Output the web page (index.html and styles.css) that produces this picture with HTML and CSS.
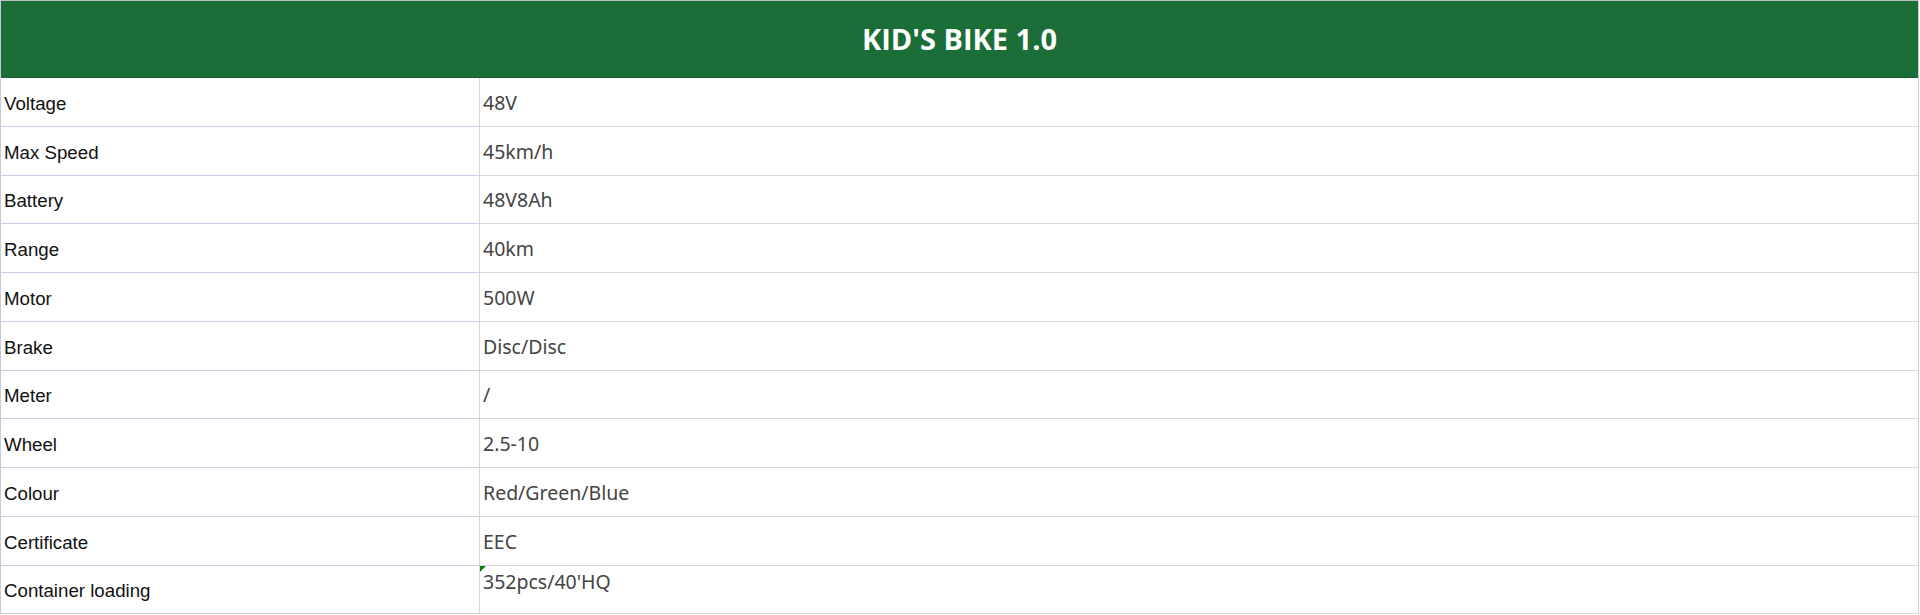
FILE: index.html
```html
<!DOCTYPE html>
<html lang="en">
<head>
<meta charset="utf-8">
<title>KID'S BIKE 1.0</title>
<link rel="stylesheet" href="styles.css">
</head>
<body>
<div class="sheet">
  <div class="title">KID'S BIKE 1.0</div>
  <div class="row"><div class="label">Voltage</div><div class="value">48V</div></div>
  <div class="row"><div class="label">Max Speed</div><div class="value">45km/h</div></div>
  <div class="row"><div class="label">Battery</div><div class="value">48V8Ah</div></div>
  <div class="row"><div class="label">Range</div><div class="value">40km</div></div>
  <div class="row"><div class="label">Motor</div><div class="value">500W</div></div>
  <div class="row"><div class="label">Brake</div><div class="value">Disc/Disc</div></div>
  <div class="row"><div class="label">Meter</div><div class="value">/</div></div>
  <div class="row"><div class="label">Wheel</div><div class="value">2.5-10</div></div>
  <div class="row"><div class="label">Colour</div><div class="value">Red/Green/Blue</div></div>
  <div class="row"><div class="label">Certificate</div><div class="value">EEC</div></div>
  <div class="row"><div class="label">Container loading</div><div class="value value-top flagged">352pcs/40'HQ</div></div>
</div>
</body>
</html>
```

FILE: styles.css
```css
html, body {
  margin: 0;
  padding: 0;
  background: #ffffff;
}

.sheet {
  width: 1919px;
  box-sizing: border-box;
  border-left: 1px solid #c3cbe0;
  border-right: 1px solid #cfcfcf;
  display: flex;
  flex-direction: column;
}

.title {
  height: 78px;
  box-sizing: border-box;
  border-top: 1px solid #bdbdbd;
  border-bottom: 1px solid #16602f;
  background: #1b6e38;
  color: #ffffff;
  font-family: "Open Sans", "Noto Sans", sans-serif;
  font-weight: 700;
  font-size: 29px;
  display: flex;
  align-items: center;
  justify-content: center;
  padding-bottom: 2px;
}

.row {
  display: flex;
  height: 48.75px;
}

.label {
  width: 479px;
  box-sizing: border-box;
  border-bottom: 1px solid #c8cfe3;
  border-right: 1px solid #d6d6d6;
  font-family: "Liberation Sans", Arial, sans-serif;
  font-size: 18.7px;
  color: #111111;
  padding: 0 0 11px 3px;
  display: flex;
  align-items: flex-end;
}

.value {
  flex: 1;
  box-sizing: border-box;
  border-bottom: 1px solid #dadada;
  font-family: "Noto Sans", "Open Sans", sans-serif;
  font-size: 19.5px;
  color: #444444;
  padding: 1px 0 0 3px;
  display: flex;
  align-items: center;
  position: relative;
}

.value-top {
  align-items: flex-start;
  padding-top: 2px;
}

.flagged::before {
  content: "";
  position: absolute;
  left: 0;
  top: 0;
  width: 0;
  height: 0;
  border-top: 6px solid #0f7b0f;
  border-right: 6px solid transparent;
}
```
